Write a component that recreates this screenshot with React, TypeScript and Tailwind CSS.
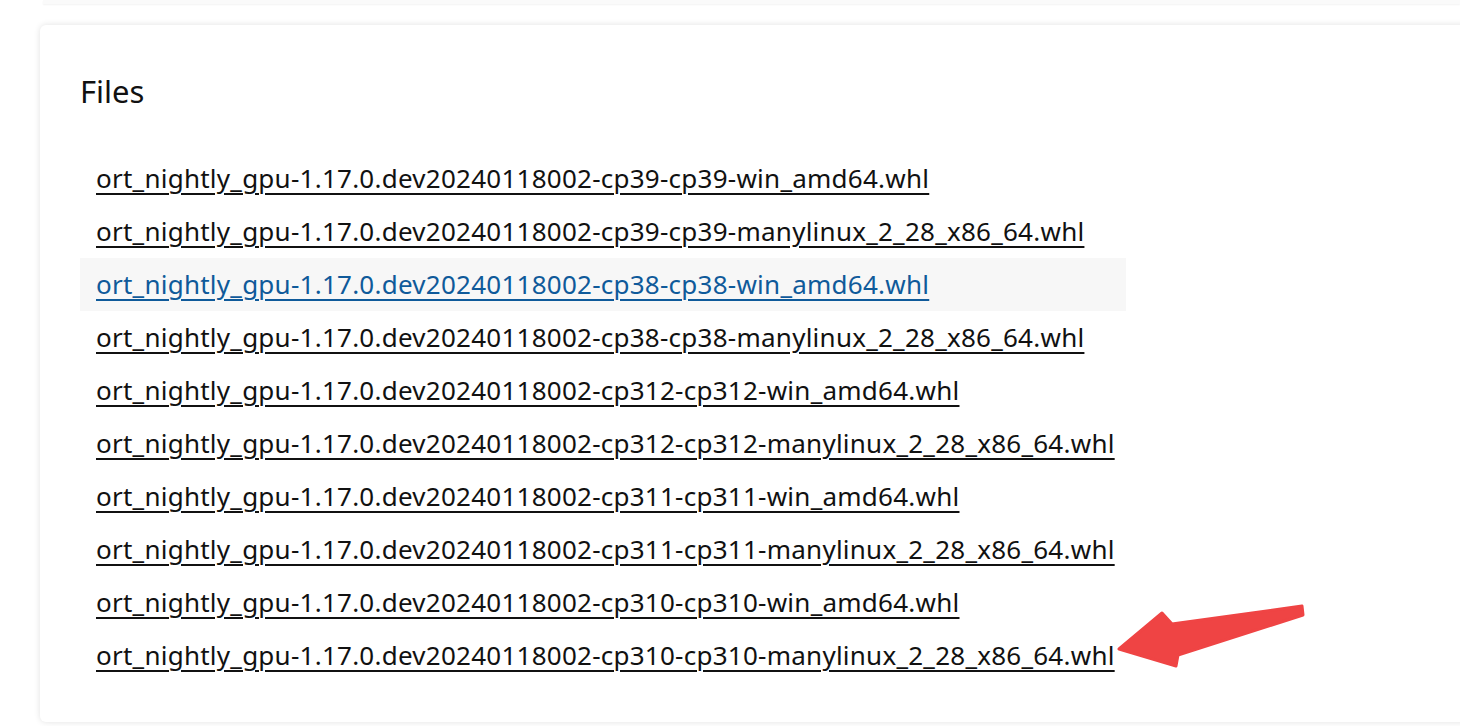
import React from "react";

const files = [
  "ort_nightly_gpu-1.17.0.dev20240118002-cp39-cp39-win_amd64.whl",
  "ort_nightly_gpu-1.17.0.dev20240118002-cp39-cp39-manylinux_2_28_x86_64.whl",
  "ort_nightly_gpu-1.17.0.dev20240118002-cp38-cp38-win_amd64.whl",
  "ort_nightly_gpu-1.17.0.dev20240118002-cp38-cp38-manylinux_2_28_x86_64.whl",
  "ort_nightly_gpu-1.17.0.dev20240118002-cp312-cp312-win_amd64.whl",
  "ort_nightly_gpu-1.17.0.dev20240118002-cp312-cp312-manylinux_2_28_x86_64.whl",
  "ort_nightly_gpu-1.17.0.dev20240118002-cp311-cp311-win_amd64.whl",
  "ort_nightly_gpu-1.17.0.dev20240118002-cp311-cp311-manylinux_2_28_x86_64.whl",
  "ort_nightly_gpu-1.17.0.dev20240118002-cp310-cp310-win_amd64.whl",
  "ort_nightly_gpu-1.17.0.dev20240118002-cp310-cp310-manylinux_2_28_x86_64.whl",
];

export default function App() {
  return (
    <div className="relative w-[1460px] h-[726px] overflow-hidden bg-white font-['Noto_Sans',_'Open_Sans',_sans-serif]">
      <div className="ml-[43px] h-[4px] bg-[#fafafa] shadow-[0_1px_2px_rgba(0,0,0,0.05)]" />
      <div className="ml-[40px] mt-[21px] w-[1440px] rounded-md bg-white pl-[40px] pt-[44px] pb-[40px] shadow-[0_0_6px_rgba(0,0,0,0.12)]">
        <h2 className="text-[31px] leading-[44px] text-[#111]">Files</h2>
        <ul className="mt-[39px] w-[1046px]">
          {files.map((f, i) => (
            <li
              key={f}
              className={`flex h-[53px] items-center pl-[16px] ${i === 2 ? "bg-[#f7f7f7]" : ""}`}
            >
              <a
                href="#"
                className={`text-[26px] tracking-[0.25px] underline underline-offset-[5px] decoration-[1.5px] ${i === 2 ? "text-[#0f5a9a]" : "text-[#111]"}`}
              >
                {f}
              </a>
            </li>
          ))}
        </ul>
      </div>
      <svg className="absolute left-0 top-0" width="1460" height="726" viewBox="0 0 1460 726">
        <polygon
          points="1119,649 1162,613 1172,624 1302,606 1303,615 1178,655 1176,666"
          fill="#ef4444"
          stroke="#ef4444"
          strokeWidth="3"
          strokeLinejoin="round"
        />
      </svg>
    </div>
  );
}
